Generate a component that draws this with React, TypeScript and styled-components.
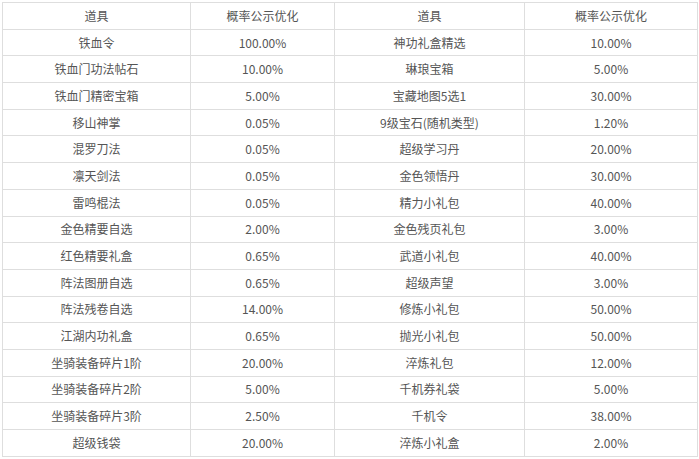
import styled, { createGlobalStyle } from 'styled-components'

const GlobalStyle = createGlobalStyle`
    html, body {
        margin:0;
        padding:0;
        background:#FFFFFF;
    }
`

const Wrapper = styled.div`
    padding:2px 0 0 2px;
`

const RateTable = styled.table`
    border-collapse:collapse;
    table-layout:fixed;
    width:695px;
    font-family:"Noto Sans CJK SC", "Microsoft YaHei", sans-serif;
    font-size:12px;
    color:#555;
`

const Row = styled.tr`
    height:26.7px;
`

const Cell = styled.td`
    border:1px solid #dedede;
    text-align:center;
    vertical-align:middle;
    padding:0;
    line-height:14px;
`

type RateItem = {
    name: string,
    rate: string
}

const leftItems: RateItem[] = [
    { name: '铁血令', rate: '100.00%' },
    { name: '铁血门功法帖石', rate: '10.00%' },
    { name: '铁血门精密宝箱', rate: '5.00%' },
    { name: '移山神掌', rate: '0.05%' },
    { name: '混罗刀法', rate: '0.05%' },
    { name: '凛天剑法', rate: '0.05%' },
    { name: '雷鸣棍法', rate: '0.05%' },
    { name: '金色精要自选', rate: '2.00%' },
    { name: '红色精要礼盒', rate: '0.65%' },
    { name: '阵法图册自选', rate: '0.65%' },
    { name: '阵法残卷自选', rate: '14.00%' },
    { name: '江湖内功礼盒', rate: '0.65%' },
    { name: '坐骑装备碎片1阶', rate: '20.00%' },
    { name: '坐骑装备碎片2阶', rate: '5.00%' },
    { name: '坐骑装备碎片3阶', rate: '2.50%' },
    { name: '超级钱袋', rate: '20.00%' },
]

const rightItems: RateItem[] = [
    { name: '神功礼盒精选', rate: '10.00%' },
    { name: '琳琅宝箱', rate: '5.00%' },
    { name: '宝藏地图5选1', rate: '30.00%' },
    { name: '9级宝石(随机类型)', rate: '1.20%' },
    { name: '超级学习丹', rate: '20.00%' },
    { name: '金色领悟丹', rate: '30.00%' },
    { name: '精力小礼包', rate: '40.00%' },
    { name: '金色残页礼包', rate: '3.00%' },
    { name: '武道小礼包', rate: '40.00%' },
    { name: '超级声望', rate: '3.00%' },
    { name: '修炼小礼包', rate: '50.00%' },
    { name: '抛光小礼包', rate: '50.00%' },
    { name: '淬炼礼包', rate: '12.00%' },
    { name: '千机券礼袋', rate: '5.00%' },
    { name: '千机令', rate: '38.00%' },
    { name: '淬炼小礼盒', rate: '2.00%' },
]

export default function App() {
    return <Wrapper>
        <GlobalStyle />
        <RateTable>
            <colgroup>
                <col style={{ width: 188 }} />
                <col style={{ width: 144 }} />
                <col style={{ width: 190 }} />
                <col style={{ width: 173 }} />
            </colgroup>
            <tbody>
                <Row>
                    <Cell>道具</Cell>
                    <Cell>概率公示优化</Cell>
                    <Cell>道具</Cell>
                    <Cell>概率公示优化</Cell>
                </Row>
                {
                    leftItems.map((item, index) =>
                        <Row key={'rate-row-' + index}>
                            <Cell>{item.name}</Cell>
                            <Cell>{item.rate}</Cell>
                            <Cell>{rightItems[index].name}</Cell>
                            <Cell>{rightItems[index].rate}</Cell>
                        </Row>
                    )
                }
            </tbody>
        </RateTable>
    </Wrapper>
}
